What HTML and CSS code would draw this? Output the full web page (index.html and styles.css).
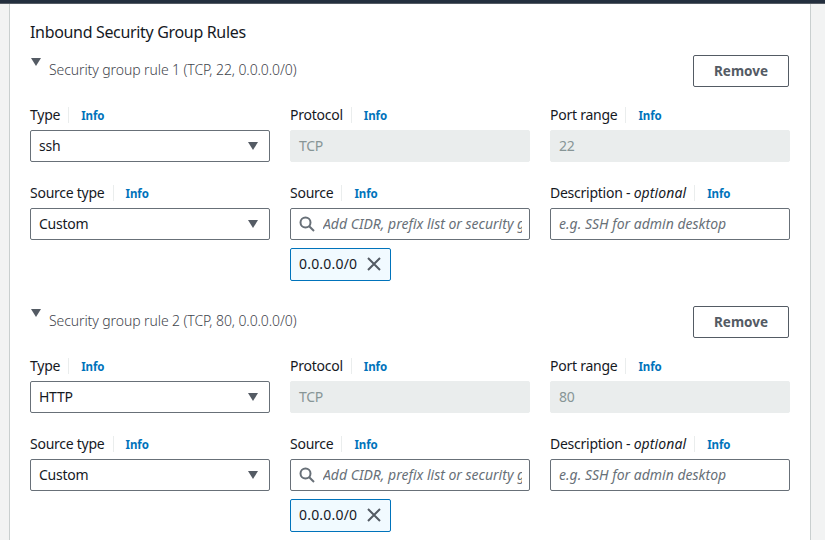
FILE: index.html
```html
<!DOCTYPE html>
<html lang="en">
<head>
<meta charset="utf-8">
<title>Inbound Security Group Rules</title>
<link rel="stylesheet" href="styles.css">
</head>
<body>
<div class="topbar"></div>
<main class="panel">
<h2 class="title"><span>Inbound Security Group Rules</span></h2>

<section class="rule">
<header class="rule-head">
<svg class="caret" viewBox="0 0 12 10"><path d="M1 1h10L6 9z"/></svg>
<span class="rule-name">Security group rule 1 (TCP, 22, 0.0.0.0/0)</span>
<button class="remove">Remove</button>
</header>
<div class="grid">
<div class="field"><div class="label"><span>Type</span><a class="info">Info</a></div><div class="control"><span>ssh</span><svg class="caret" viewBox="0 0 12 10"><path d="M1 1h10L6 9z"/></svg></div></div>
<div class="field"><div class="label"><span>Protocol</span><a class="info">Info</a></div><div class="control disabled"><span>TCP</span></div></div>
<div class="field"><div class="label"><span>Port range</span><a class="info">Info</a></div><div class="control disabled"><span>22</span></div></div>
<div class="field"><div class="label"><span>Source type</span><a class="info">Info</a></div><div class="control"><span>Custom</span><svg class="caret" viewBox="0 0 12 10"><path d="M1 1h10L6 9z"/></svg></div></div>
<div class="field"><div class="label"><span>Source</span><a class="info">Info</a></div><div class="control search"><svg class="glass" viewBox="0 0 16 16"><circle cx="6.5" cy="6.5" r="5"/><path d="M10.2 10.2L15 15"/></svg><span class="hint">Add CIDR, prefix list or security g</span></div>
<div class="token"><span>0.0.0.0/0</span><svg class="close" viewBox="0 0 14 14"><path d="M1 1l12 12M13 1L1 13"/></svg></div></div>
<div class="field"><div class="label"><span>Description - <i>optional</i></span><a class="info">Info</a></div><div class="control"><span class="hint">e.g. SSH for admin desktop</span></div></div>
</div>
</section>

<section class="rule">
<header class="rule-head">
<svg class="caret" viewBox="0 0 12 10"><path d="M1 1h10L6 9z"/></svg>
<span class="rule-name">Security group rule 2 (TCP, 80, 0.0.0.0/0)</span>
<button class="remove">Remove</button>
</header>
<div class="grid">
<div class="field"><div class="label"><span>Type</span><a class="info">Info</a></div><div class="control"><span>HTTP</span><svg class="caret" viewBox="0 0 12 10"><path d="M1 1h10L6 9z"/></svg></div></div>
<div class="field"><div class="label"><span>Protocol</span><a class="info">Info</a></div><div class="control disabled"><span>TCP</span></div></div>
<div class="field"><div class="label"><span>Port range</span><a class="info">Info</a></div><div class="control disabled"><span>80</span></div></div>
<div class="field"><div class="label"><span>Source type</span><a class="info">Info</a></div><div class="control"><span>Custom</span><svg class="caret" viewBox="0 0 12 10"><path d="M1 1h10L6 9z"/></svg></div></div>
<div class="field"><div class="label"><span>Source</span><a class="info">Info</a></div><div class="control search"><svg class="glass" viewBox="0 0 16 16"><circle cx="6.5" cy="6.5" r="5"/><path d="M10.2 10.2L15 15"/></svg><span class="hint">Add CIDR, prefix list or security g</span></div>
<div class="token"><span>0.0.0.0/0</span><svg class="close" viewBox="0 0 14 14"><path d="M1 1l12 12M13 1L1 13"/></svg></div></div>
<div class="field"><div class="label"><span>Description - <i>optional</i></span><a class="info">Info</a></div><div class="control"><span class="hint">e.g. SSH for admin desktop</span></div></div>
</div>
</section>
</main>
</body>
</html>
```
FILE: styles.css
```css
* { box-sizing: border-box; }
body {
  margin: 0;
  height: 540px;
  overflow: hidden;
  background: #f2f3f3;
  color: #16191f;
  font: 14px/22px "Noto Sans", "Open Sans", sans-serif;
  letter-spacing: -0.25px;
}
.topbar { height: 4px; background: #232f3e; border-bottom: 1px solid #545b64; }
.panel {
  width: 802px;
  height: 560px;
  margin-left: 9px;
  padding: 17px 20px 0;
  background: #fff;
  border: solid #c9cfcf;
  border-width: 0 1px;
}
.title { margin: 0; font-size: 16px; line-height: 22px; font-weight: 400; letter-spacing: -0.33px; }
.rule { height: 251px; padding-top: 12px; }
.rule-head { display: flex; align-items: flex-start; height: 32px; }
.caret { flex: none; width: 12px; height: 10px; fill: #545b64; }
.rule-head .caret { margin-top: 2px; }
.rule-name { margin: 4px auto 0 7px; color: #3f454d; font-weight: 300; letter-spacing: -0.09px; }
.remove {
  width: 96px;
  height: 32px;
  margin-right: 1px;
  padding: 0;
  border: 1px solid #545b64;
  border-radius: 2px;
  background: #fff;
  color: #545b64;
  font: 700 13.5px/22px "Noto Sans", sans-serif;
  letter-spacing: 0;
}
.grid { display: grid; grid-template-columns: repeat(3, 240px); gap: 23px 20px; margin-top: 20px; }
.label { display: flex; align-items: center; height: 16px; margin-bottom: 7px; white-space: nowrap; }
.label i { letter-spacing: 0.1px; }
.info {
  height: 16px;
  margin-left: 8px;
  padding-left: 12px;
  border-left: 1px solid #eaeded;
  color: #0073bb;
  font-size: 11.5px;
  font-weight: 700;
  line-height: 17px;
  letter-spacing: -0.1px;
}
.control {
  display: flex;
  align-items: center;
  height: 32px;
  padding: 0 8px;
  border: 1px solid #687078;
  border-radius: 2px;
  background: #fff;
}
.control .caret { margin: 0 2px 0 auto; }
.disabled { background: #eaeded; border-color: #eaeded; color: #879596; }
.hint { overflow: hidden; color: #687078; font-style: italic; white-space: nowrap; letter-spacing: 0; }
.search { padding-right: 7px; }
.glass { flex: none; width: 16px; height: 16px; margin-right: 8px; fill: none; stroke: #687078; stroke-width: 2; }
.token {
  display: flex;
  align-items: center;
  justify-content: space-between;
  width: 101px;
  height: 33px;
  margin-top: 8px;
  padding: 0 9px 1px 8px;
  border: 1px solid #0073bb;
  border-radius: 2px;
  background: #f1faff;
  letter-spacing: 0.2px;
}
.close { width: 14px; height: 14px; fill: none; stroke: #545b64; stroke-width: 2; }
```
